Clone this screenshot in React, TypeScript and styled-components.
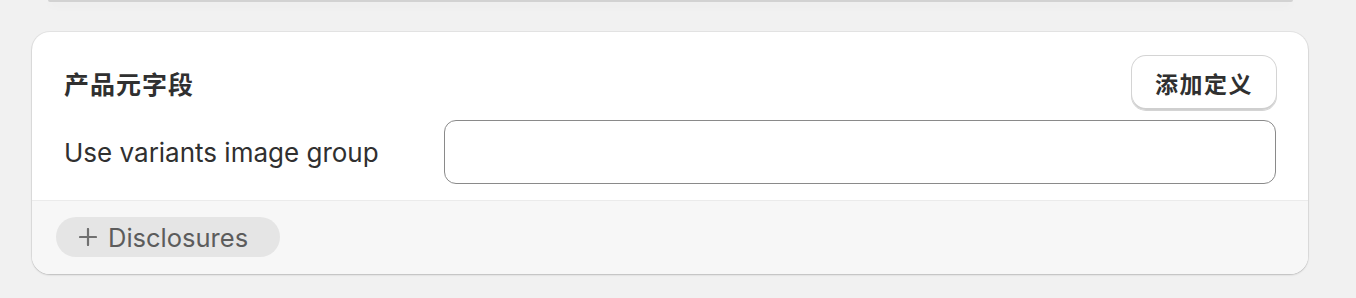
import styled, { createGlobalStyle } from "styled-components";

const GlobalStyle = createGlobalStyle`
  html, body {
    margin: 0;
    padding: 0;
    background: #f1f1f1;
  }
  body {
    font-family: "Inter", "Noto Sans CJK SC", "Noto Sans", sans-serif;
    color: #303030;
    -webkit-font-smoothing: antialiased;
  }
`;

const App = () => {
  return (
    <>
      <GlobalStyle />
      <Page>
        <PrevCardEdge />
        <Card>
          <CardBody>
            <HeaderRow>
              <Title>产品元字段</Title>
              <SecondaryButton type="button">添加定义</SecondaryButton>
            </HeaderRow>
            <FieldRow>
              <FieldLabel>Use variants image group</FieldLabel>
              <TextInput type="text" />
            </FieldRow>
          </CardBody>
          <CardFooter>
            <PillButton type="button">
              <PlusIcon viewBox="0 0 18 18" aria-hidden="true">
                <path d="M9 1v16M1 9h16" />
              </PlusIcon>
              Disclosures
            </PillButton>
          </CardFooter>
        </Card>
      </Page>
    </>
  );
};

export default App;

const Page = styled.div`
  width: 1356px;
  height: 298px;
  display: flex;
  flex-direction: column;
  box-sizing: border-box;
  overflow: hidden;
`;

const PrevCardEdge = styled.div`
  height: 2px;
  margin: 0 63px 0 48px;
  background: #d2d2d2;
  box-shadow: 0 3px 10px rgba(0, 0, 0, 0.06);
  border-radius: 0 0 4px 4px;
`;

const Card = styled.div`
  margin: 30px 48px 0 32px;
  background: #fff;
  border-radius: 18px;
  overflow: hidden;
  box-shadow: 0 1px 2px rgba(0, 0, 0, 0.18), 0 0 0 1px rgba(0, 0, 0, 0.05);
`;

const CardBody = styled.div`
  padding: 24px 32px 16px 32px;
  display: flex;
  flex-direction: column;
  gap: 10px;
`;

const HeaderRow = styled.div`
  display: flex;
  align-items: center;
  justify-content: space-between;
`;

const Title = styled.h2`
  margin: 0;
  font-family: "Noto Sans CJK SC", "Inter", sans-serif;
  font-size: 25px;
  font-weight: 600;
  letter-spacing: 1px;
  color: #303030;
`;

const SecondaryButton = styled.button`
  height: 54px;
  width: 144px;
  padding: 0;
  border: none;
  border-radius: 14px;
  background: #fff;
  font-family: "Noto Sans CJK SC", "Inter", sans-serif;
  font-size: 23px;
  font-weight: 600;
  letter-spacing: 1.5px;
  color: #303030;
  box-shadow: 0 0 0 1px #d4d4d4, inset 0 -2px 0 #cfcfcf;
`;

const FieldRow = styled.div`
  display: grid;
  grid-template-columns: 364px 1fr;
  column-gap: 16px;
  align-items: center;
`;

const FieldLabel = styled.label`
  font-size: 26px;
  font-weight: 400;
  color: #303030;
`;

const TextInput = styled.input`
  height: 64px;
  box-sizing: border-box;
  border: 1px solid #8a8a8a;
  border-radius: 12px;
  background: #fff;
  padding: 0 16px;
  font-size: 20px;
  outline: none;
`;

const CardFooter = styled.div`
  background: #f7f7f7;
  border-top: 1px solid #ebebeb;
  padding: 16px 24px 17px;
  display: flex;
`;

const PillButton = styled.button`
  height: 40px;
  width: 224px;
  display: flex;
  align-items: center;
  gap: 11px;
  padding: 0 23px;
  border: none;
  border-radius: 20px;
  background: #e5e5e5;
  font-family: "Inter", sans-serif;
  font-size: 25.5px;
  color: #5c5c5c;
`;

const PlusIcon = styled.svg`
  width: 18px;
  height: 18px;
  flex: none;
  fill: none;
  stroke: #707070;
  stroke-width: 2.2;
  stroke-linecap: round;
`;
